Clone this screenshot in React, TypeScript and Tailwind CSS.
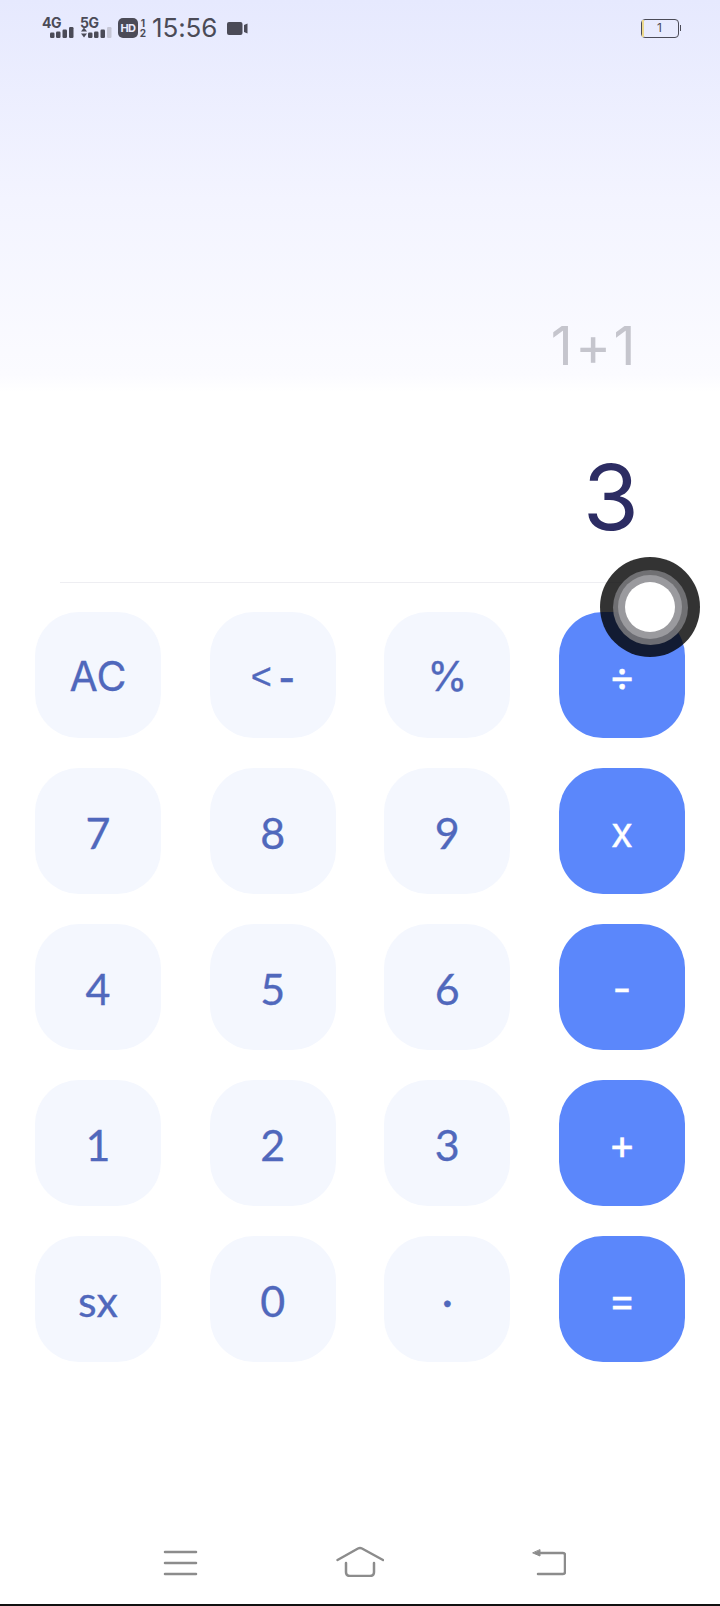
const font = { fontFamily: "Inter, 'Liberation Sans', sans-serif" };

const rows = [
  ["AC", "<-", "%", "÷"],
  ["7", "8", "9", "x"],
  ["4", "5", "6", "-"],
  ["1", "2", "3", "+"],
  ["sx", "0", "·", "="],
];

const interKeys = ["AC", "%", "÷", "x", "-", "+", "="];

function Bars({ dim }: { dim?: boolean }) {
  return (
    <svg width="24" height="11" viewBox="0 0 24 11" className="block">
      <rect x="0" y="5.5" width="4.5" height="5.5" rx="1.2" fill="#4b4b57" />
      <rect x="6" y="4.5" width="4.5" height="6.5" rx="1.2" fill="#4b4b57" />
      <rect x="12.5" y="2.5" width="4.5" height="8.5" rx="1.2" fill="#4b4b57" />
      <rect x="19" y="0" width="4.5" height="11" rx="1.2" fill={dim ? "#c6c7d6" : "#4b4b57"} />
    </svg>
  );
}

function StatusBar() {
  return (
    <div className="flex h-[56px] items-center justify-between pl-[42px] pr-[39px] text-[#4b4b57]">
      <div className="flex items-center">
        <div className="relative h-[20px] w-[32px]">
          <span className="absolute left-0 top-[-2px] text-[14px] font-bold leading-[14px] tracking-[-0.5px]">4G</span>
          <div className="absolute left-[8px] top-[9px]">
            <Bars />
          </div>
        </div>
        <div className="relative ml-[6px] h-[20px] w-[33px]">
          <span className="absolute left-0 top-[-2px] text-[14px] font-bold leading-[14px] tracking-[-0.5px]">5G</span>
          <svg width="6" height="11" viewBox="0 0 6 11" className="absolute left-[1px] top-[9px]">
            <path d="M0 4.5L3 .5l3 4zM0 6.5l3 4 3-4z" fill="#4b4b57" />
          </svg>
          <div className="absolute left-[8px] top-[9px]">
            <Bars dim />
          </div>
        </div>
        <div className="ml-[5px] flex h-[20px] w-[20px] items-center justify-center rounded-[5px] bg-[#4b4b57] text-[11px] font-bold tracking-[-0.5px] text-[#e9ebfe]">
          HD
        </div>
        <div className="ml-[1px] flex w-[8px] flex-col items-center text-[10px] font-bold leading-[10px]">
          <span>1</span>
          <span>2</span>
        </div>
        <span className="ml-[5px] text-[26px] leading-[30px] tracking-[-0.1px]">15:56</span>
        <svg width="21" height="13" viewBox="0 0 21 13" className="ml-[10px]">
          <rect x="0" y="0" width="15.5" height="13" rx="2" fill="#4b4b57" />
          <path d="M17 3l3.5-1.5v10L17 10z" fill="#4b4b57" />
        </svg>
      </div>
      <div className="flex items-center">
        <div className="relative flex h-[19px] w-[38px] items-center justify-center rounded-[4px] border-[1.5px] border-[#4b4b57] text-[12px] leading-none">
          <div className="absolute bottom-0 left-0 top-0 w-[2px] bg-[#ecd98e]" />
          1
        </div>
        <div className="ml-[1px] h-[6px] w-[1.5px] bg-[#4b4b57]" />
      </div>
    </div>
  );
}

function Key({ label, op }: { label: string; op: boolean }) {
  const inter = interKeys.includes(label);
  return (
    <button
      className={
        "flex h-[126px] w-[126px] items-center justify-center rounded-[44px] " +
        (inter ? "pt-[2px] text-[41px] leading-none [-webkit-text-stroke:0.3px] " : "pt-[3px] font-['Lato'] text-[43px] leading-none [-webkit-text-stroke:0.3px] ") +
        (op ? "bg-[#5b87fb] text-white" : "bg-[#f4f7fe] text-[#5068bc]")
      }
    >
      {label === "<-" ? (
        <span className="flex items-center gap-[7px] font-['Liberation_Sans'] leading-none">
          <span className="text-[36px]">&lt;</span>
          <span className="text-[48px]">-</span>
        </span>
      ) : (
        label
      )}
    </button>
  );
}

function NavBar() {
  return (
    <div className="flex items-start pl-[163px] pr-[154px]">
      <svg width="35" height="28" viewBox="0 0 35 28" fill="none" stroke="#8c8c8c" strokeWidth="2.5" strokeLinecap="round">
        <path d="M2 3h31M2 14h31M2 25h31" />
      </svg>
      <svg width="48" height="31" viewBox="0 0 48 31" className="ml-[138px] mt-[-3px]" fill="none" stroke="#8c8c8c" strokeWidth="2.5" strokeLinecap="round" strokeLinejoin="round">
        <path d="M1.5 14L22 2.5q2-1 4 0L47 14" />
        <path d="M10 17v9q0 4 4 4h20q4 0 4-4v-9" />
      </svg>
      <svg width="35" height="28" viewBox="0 0 35 28" className="ml-auto" fill="none" stroke="#8c8c8c" strokeWidth="2.5" strokeLinecap="round" strokeLinejoin="round">
        <path d="M8 4h24q2 0 2 2v17q0 2-2 2H7" />
        <path d="M9 1v6L2 4z" fill="#8c8c8c" strokeWidth="1" />
      </svg>
    </div>
  );
}

export default function App() {
  return (
    <div
      className="relative flex h-[1606px] w-[720px] flex-col overflow-hidden bg-[linear-gradient(180deg,#e6e9fe_0px,#f3f4ff_200px,#fbfbff_375px,#ffffff_392px)]"
      style={font}
    >
      <StatusBar />

      {/* display */}
      <div className="flex h-[526px] flex-col items-end">
        <div className="mr-[82px] mt-[257px] text-[54px] leading-[66px] tracking-[2.5px] text-[#c5c5cd]">1+1</div>
        <div className="mr-[81px] mt-[62px] text-[91px] leading-[112px] text-[#2c2c63]">3</div>
      </div>
      <div className="mx-[60px] h-px bg-[#eeeef2]" />

      {/* keypad */}
      <div className="mt-[29px] flex flex-col gap-[30px] px-[35px]">
        {rows.map((row) => (
          <div key={row[0]} className="flex justify-between">
            {row.map((k, i) => (
              <Key key={k} label={k} op={i === 3} />
            ))}
          </div>
        ))}
      </div>

      <div className="mt-[187px]">
        <NavBar />
      </div>

      <div className="absolute bottom-0 left-0 right-0 h-[2px] bg-[#111]" />

      {/* floating assistive touch */}
      <div className="absolute left-[600px] top-[557px] flex h-[100px] w-[100px] items-center justify-center rounded-full bg-black/80">
        <div className="flex h-[75px] w-[75px] items-center justify-center rounded-full bg-[#77777a]/90">
          <div className="flex h-[64px] w-[64px] items-center justify-center rounded-full bg-[#9a9a9e]">
            <div className="h-[50px] w-[50px] rounded-full bg-white" />
          </div>
        </div>
      </div>
    </div>
  );
}
